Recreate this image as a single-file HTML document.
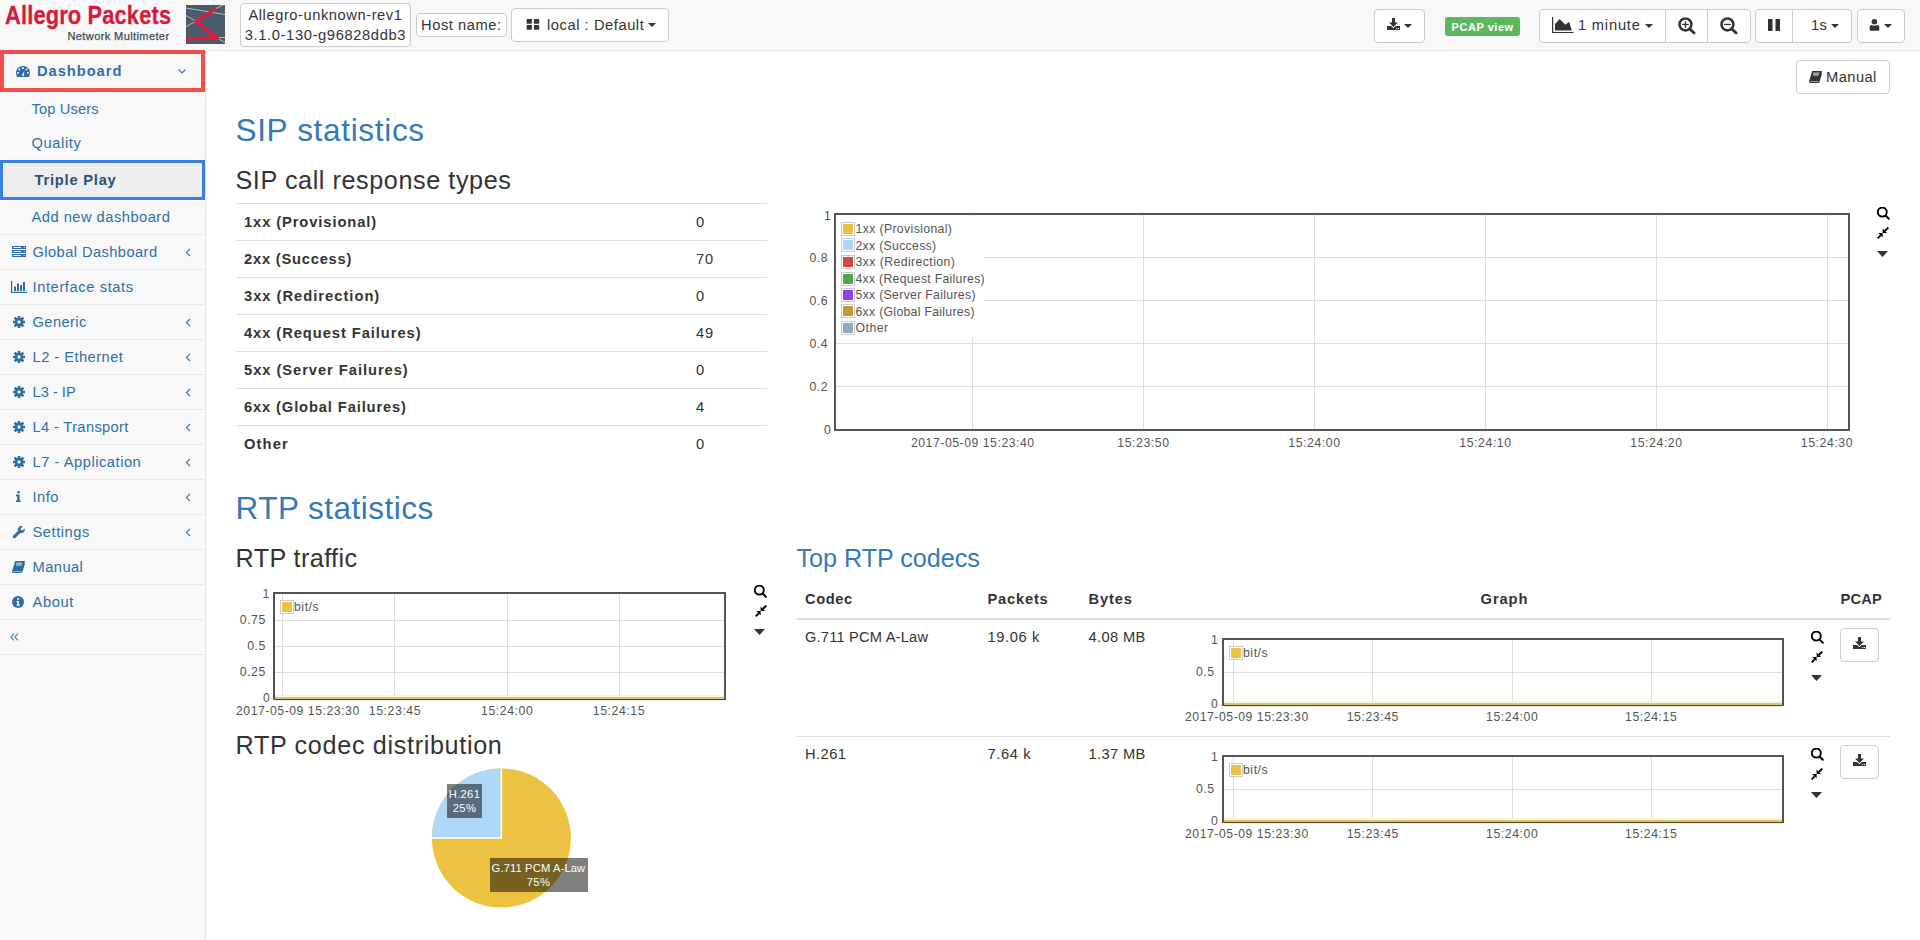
<!DOCTYPE html>
<html><head><meta charset="utf-8"><title>Allegro Packets - Triple Play</title>
<style>
html,body{margin:0;padding:0;width:1920px;height:940px;overflow:hidden;background:#fff;font-family:"Liberation Sans",sans-serif;}
.t{position:absolute;white-space:pre;}
.r{position:absolute;box-sizing:border-box;}
</style></head><body>
<div class="r" style="left:0px;top:0px;width:1920px;height:51px;background:#f8f8f8;border-bottom:1px solid #e7e7e7"></div>
<div class="t" style="left:4.5px;top:0px;font-size:25.3px;line-height:30px;font-weight:bold;color:#d81b3c;letter-spacing:0.2px;-webkit-text-stroke:0.3px #d81b3c;transform:scaleX(0.862);transform-origin:0 0">Allegro Packets</div>
<div class="t" style="left:67.5px;top:29.5px;font-size:11px;line-height:13px;color:#3e4a55;letter-spacing:0.4px;-webkit-text-stroke:0.25px #3e4a55">Network Multimeter</div>
<svg class="r" style="left:186px;top:5px;" width="39" height="39" viewBox="0 0 39 39"><rect width="39" height="39" fill="#4b5b6a"/><g stroke="#ccd6e0" stroke-width="0.8" fill="none"><path d="M0 3 L39 9.5"/><path d="M30 3.5 L39 -1"/><path d="M0 10.5 L10 16.3 L0 21.5"/><path d="M31 32.5 L39 32.5"/><path d="M31 33 L39 37.5"/></g><path d="M30 3.5 L10 16.3 L30.5 32.5 L0 33.8" stroke="#e8173e" stroke-width="3.2" fill="none" stroke-linejoin="miter"/></svg>
<div class="r" style="left:240px;top:3px;width:171px;height:44px;background:#fff;border:1px solid #ccc;border-radius:4px"></div>
<div class="t" style="left:248.45px;top:5.91px;font-size:14.70px;line-height:18px;letter-spacing:0.556px;color:#333;">Allegro-unknown-rev1</div>
<div class="t" style="left:244.78px;top:25.91px;font-size:14.70px;line-height:18px;letter-spacing:0.633px;color:#333;">3.1.0-130-g96828ddb3</div>
<div class="r" style="left:416px;top:13px;width:91px;height:24px;background:#fff;border:1px solid #ccc;border-radius:4px"></div>
<div class="t" style="left:421.00px;top:15.91px;font-size:14.70px;line-height:18px;letter-spacing:0.558px;color:#333;">Host name:</div>
<div class="r" style="left:511px;top:8px;width:158px;height:34px;background:#fff;border:1px solid #ccc;border-radius:4px"></div>
<svg class="r" style="left:526px;top:19px;" width="14" height="11" viewBox="0 0 14 11"><g fill="#333"><rect x="0.65" y="0" width="5.25" height="4.7" rx="0.7"/><rect x="7.9" y="0" width="5.3" height="4.7" rx="0.7"/><rect x="0.65" y="6.1" width="5.25" height="4.7" rx="0.7"/><rect x="7.9" y="6.1" width="5.3" height="4.7" rx="0.7"/></g></svg>
<div class="t" style="left:547.00px;top:15.91px;font-size:14.70px;line-height:18px;letter-spacing:0.555px;color:#333;">local : Default</div>
<svg class="r" style="left:648px;top:23px;" width="8" height="4" viewBox="0 0 8 4"><path d="M0 0 L8 0 L4 4 Z" fill="#333"/></svg>
<div class="r" style="left:1374px;top:9px;width:51px;height:34px;background:#fff;border:1px solid #ccc;border-radius:4px"></div>
<svg class="r" style="left:1387px;top:18px;" width="13" height="12" viewBox="0 0 13 12"><path d="M5 0 H8 V4.5 H11 L6.5 9 L2 4.5 H5 Z" fill="#333"/><path d="M0 8 H4.2 L6.5 10.2 L8.8 8 H13 V12 H0 Z" fill="#333"/><rect x="9.3" y="10" width="1.1" height="1.1" fill="#fff"/><rect x="11" y="10" width="1.1" height="1.1" fill="#fff"/></svg>
<svg class="r" style="left:1404.4px;top:24px;" width="8" height="4" viewBox="0 0 8 4"><path d="M0 0 L8 0 L4 4 Z" fill="#333"/></svg>
<div class="r" style="left:1445px;top:17px;width:75px;height:19px;background:#5cb85c;border-radius:3px"></div>
<div class="t" style="left:1451.50px;top:20.38px;font-size:11.03px;line-height:14px;letter-spacing:0.542px;color:#fff;font-weight:bold;">PCAP view</div>
<div class="r" style="left:1539px;top:9px;width:212px;height:34px;background:#fff;border:1px solid #ccc;border-radius:4px"></div>
<div class="r" style="left:1665px;top:9px;width:1px;height:34px;background:#ccc"></div>
<div class="r" style="left:1707px;top:9px;width:1px;height:34px;background:#ccc"></div>
<svg class="r" style="left:1552px;top:17px;" width="22" height="17" viewBox="0 0 22 17"><path d="M0 0 H1.2 V14.9 H21.5 V16 H0 Z" fill="#333"/><path d="M3 7.3 L7.5 1.9 L13.4 7.8 L17.2 4.7 L19.8 13.5 H3 Z" fill="#333"/></svg>
<div class="t" style="left:1578.00px;top:15.91px;font-size:14.70px;line-height:18px;letter-spacing:0.794px;color:#333;">1 minute</div>
<svg class="r" style="left:1645px;top:24px;" width="8" height="4" viewBox="0 0 8 4"><path d="M0 0 L8 0 L4 4 Z" fill="#333"/></svg>
<svg class="r" style="left:1678px;top:17px;" width="18" height="18" viewBox="0 0 18 18"><circle cx="7.45" cy="7.45" r="5.95" stroke="#333" stroke-width="2.5" fill="none"/><path d="M11.9 11.9 L16.1 16.1" stroke="#333" stroke-width="2.8" stroke-linecap="round"/><path d="M4.1 7.45 H10.8" stroke="#333" stroke-width="1.3"/><path d="M7.45 4.2 V10.8" stroke="#333" stroke-width="1.3"/></svg>
<svg class="r" style="left:1720px;top:17px;" width="18" height="18" viewBox="0 0 18 18"><circle cx="7.45" cy="7.45" r="5.95" stroke="#333" stroke-width="2.5" fill="none"/><path d="M11.9 11.9 L16.1 16.1" stroke="#333" stroke-width="2.8" stroke-linecap="round"/><path d="M4.1 7.45 H10.8" stroke="#333" stroke-width="1.3"/></svg>
<div class="r" style="left:1755px;top:9px;width:97px;height:34px;background:#fff;border:1px solid #ccc;border-radius:4px"></div>
<div class="r" style="left:1792px;top:9px;width:1px;height:34px;background:#ccc"></div>
<svg class="r" style="left:1768px;top:19px;" width="12" height="12" viewBox="0 0 12 12"><rect x="0" y="0" width="4.5" height="12" fill="#333"/><rect x="7.5" y="0" width="4.5" height="12" fill="#333"/></svg>
<div class="t" style="left:1811.00px;top:15.71px;font-size:14.70px;line-height:18px;letter-spacing:0.337px;color:#333;">1s</div>
<svg class="r" style="left:1831px;top:24px;" width="8" height="4" viewBox="0 0 8 4"><path d="M0 0 L8 0 L4 4 Z" fill="#333"/></svg>
<div class="r" style="left:1857px;top:9px;width:48px;height:34px;background:#fff;border:1px solid #ccc;border-radius:4px"></div>
<svg class="r" style="left:1869px;top:18px;" width="11" height="13" viewBox="0 0 11 13"><ellipse cx="5.4" cy="3.7" rx="2.8" ry="2.75" fill="#333"/><path d="M0.7 12.6 V9.2 C0.7 7.9 1.5 7.1 2.7 7.1 C3.5 7.5 4.4 7.7 5.4 7.7 C6.4 7.7 7.3 7.5 8.1 7.1 C9.4 7.1 10.2 7.9 10.3 9.2 V12.1 C10.3 12.5 10 12.7 9.6 12.7 H1.3 C0.9 12.7 0.7 12.5 0.7 12.1 Z" fill="#333"/></svg>
<svg class="r" style="left:1884px;top:24px;" width="8" height="4" viewBox="0 0 8 4"><path d="M0 0 L8 0 L4 4 Z" fill="#333"/></svg>
<div class="r" style="left:0px;top:51px;width:206px;height:889px;background:#f8f8f8;border-right:1px solid #e7e7e7"></div>
<div class="r" style="left:0px;top:50px;width:205px;height:42px;background:#f8f8f8;border:4px solid #f24c4c"></div>
<svg class="r" style="left:16px;top:66px;" width="14" height="11" viewBox="0 0 14 11"><path d="M7 0 C3.1 0 0 3.1 0 7 C0 8.4 0.4 9.8 1.1 11 H12.9 C13.6 9.8 14 8.4 14 7 C14 3.1 10.9 0 7 0 Z" fill="#2d6ca4"/><g fill="#f8f8f8"><rect x="1.1" y="6.1" width="1.7" height="1.7" rx="0.3"/><rect x="2.5" y="2.6" width="1.7" height="1.7" rx="0.3"/><rect x="6.1" y="1.2" width="1.7" height="1.7" rx="0.3"/><rect x="9.7" y="2.6" width="1.7" height="1.7" rx="0.3"/><rect x="11.1" y="6.1" width="1.7" height="1.7" rx="0.3"/><path d="M6.1 9.2 C6.1 8.4 6.6 7.9 7 7.6 L8.6 4.2 L7.9 8.1 C8.1 8.5 8.1 9.4 7.9 9.8 C7.5 10.4 6.3 10.2 6.1 9.2 Z"/></g></svg>
<div class="t" style="left:37.00px;top:61.91px;font-size:14.70px;line-height:18px;letter-spacing:0.956px;color:#2f70a9;font-weight:bold;">Dashboard</div>
<svg class="r" style="left:178px;top:69px;" width="8" height="5" viewBox="0 0 8 5"><path d="M0.6 0.6 L4 4 L7.4 0.6" stroke="#3a6d9a" stroke-width="1.2" fill="none"/></svg>
<div class="t" style="left:31.50px;top:100.21px;font-size:14.70px;line-height:18px;letter-spacing:0.123px;color:#2f70a9;">Top Users</div>
<div class="t" style="left:31.50px;top:134.41px;font-size:14.70px;line-height:18px;letter-spacing:0.611px;color:#2f70a9;">Quality</div>
<div class="r" style="left:0px;top:160px;width:205px;height:40px;background:#eeeeee;border:3px solid #3b7ddd"></div>
<div class="t" style="left:34.50px;top:170.91px;font-size:14.70px;line-height:18px;letter-spacing:0.779px;color:#23527c;font-weight:bold;">Triple Play</div>
<div class="t" style="left:31.50px;top:207.71px;font-size:14.70px;line-height:18px;letter-spacing:0.484px;color:#2f70a9;">Add new dashboard</div>
<div class="r" style="left:0px;top:234px;width:205px;height:1px;background:#e7e7e7"></div>
<div class="r" style="left:0px;top:269px;width:205px;height:1px;background:#e7e7e7"></div>
<div class="r" style="left:0px;top:304px;width:205px;height:1px;background:#e7e7e7"></div>
<div class="r" style="left:0px;top:339px;width:205px;height:1px;background:#e7e7e7"></div>
<div class="r" style="left:0px;top:374px;width:205px;height:1px;background:#e7e7e7"></div>
<div class="r" style="left:0px;top:409px;width:205px;height:1px;background:#e7e7e7"></div>
<div class="r" style="left:0px;top:444px;width:205px;height:1px;background:#e7e7e7"></div>
<div class="r" style="left:0px;top:479px;width:205px;height:1px;background:#e7e7e7"></div>
<div class="r" style="left:0px;top:514px;width:205px;height:1px;background:#e7e7e7"></div>
<div class="r" style="left:0px;top:549px;width:205px;height:1px;background:#e7e7e7"></div>
<div class="r" style="left:0px;top:584px;width:205px;height:1px;background:#e7e7e7"></div>
<div class="r" style="left:0px;top:619px;width:205px;height:1px;background:#e7e7e7"></div>
<div class="r" style="left:0px;top:654px;width:205px;height:1px;background:#e7e7e7"></div>
<div class="t" style="left:32.50px;top:242.61px;font-size:14.70px;line-height:18px;letter-spacing:0.411px;color:#2f70a9;">Global Dashboard</div>
<svg class="r" style="left:185px;top:248.2px;" width="6" height="9" viewBox="0 0 6 9"><path d="M5 1 L1.4 4.5 L5 8" stroke="#3f78ae" stroke-width="1.1" fill="none"/></svg>
<div class="t" style="left:32.50px;top:277.61px;font-size:14.70px;line-height:18px;letter-spacing:0.596px;color:#2f70a9;">Interface stats</div>
<div class="t" style="left:32.50px;top:312.61px;font-size:14.70px;line-height:18px;letter-spacing:0.403px;color:#2f70a9;">Generic</div>
<svg class="r" style="left:185px;top:318.2px;" width="6" height="9" viewBox="0 0 6 9"><path d="M5 1 L1.4 4.5 L5 8" stroke="#3f78ae" stroke-width="1.1" fill="none"/></svg>
<div class="t" style="left:32.50px;top:347.61px;font-size:14.70px;line-height:18px;letter-spacing:0.460px;color:#2f70a9;">L2 - Ethernet</div>
<svg class="r" style="left:185px;top:353.2px;" width="6" height="9" viewBox="0 0 6 9"><path d="M5 1 L1.4 4.5 L5 8" stroke="#3f78ae" stroke-width="1.1" fill="none"/></svg>
<div class="t" style="left:32.50px;top:382.61px;font-size:14.70px;line-height:18px;letter-spacing:-0.011px;color:#2f70a9;">L3 - IP</div>
<svg class="r" style="left:185px;top:388.2px;" width="6" height="9" viewBox="0 0 6 9"><path d="M5 1 L1.4 4.5 L5 8" stroke="#3f78ae" stroke-width="1.1" fill="none"/></svg>
<div class="t" style="left:32.50px;top:417.61px;font-size:14.70px;line-height:18px;letter-spacing:0.346px;color:#2f70a9;">L4 - Transport</div>
<svg class="r" style="left:185px;top:423.2px;" width="6" height="9" viewBox="0 0 6 9"><path d="M5 1 L1.4 4.5 L5 8" stroke="#3f78ae" stroke-width="1.1" fill="none"/></svg>
<div class="t" style="left:32.50px;top:452.61px;font-size:14.70px;line-height:18px;letter-spacing:0.523px;color:#2f70a9;">L7 - Application</div>
<svg class="r" style="left:185px;top:458.2px;" width="6" height="9" viewBox="0 0 6 9"><path d="M5 1 L1.4 4.5 L5 8" stroke="#3f78ae" stroke-width="1.1" fill="none"/></svg>
<div class="t" style="left:32.50px;top:487.61px;font-size:14.70px;line-height:18px;letter-spacing:0.494px;color:#2f70a9;">Info</div>
<svg class="r" style="left:185px;top:493.2px;" width="6" height="9" viewBox="0 0 6 9"><path d="M5 1 L1.4 4.5 L5 8" stroke="#3f78ae" stroke-width="1.1" fill="none"/></svg>
<div class="t" style="left:32.50px;top:522.61px;font-size:14.70px;line-height:18px;letter-spacing:0.538px;color:#2f70a9;">Settings</div>
<svg class="r" style="left:185px;top:528.2px;" width="6" height="9" viewBox="0 0 6 9"><path d="M5 1 L1.4 4.5 L5 8" stroke="#3f78ae" stroke-width="1.1" fill="none"/></svg>
<div class="t" style="left:32.50px;top:557.61px;font-size:14.70px;line-height:18px;letter-spacing:0.443px;color:#2f70a9;">Manual</div>
<div class="t" style="left:32.50px;top:592.61px;font-size:14.70px;line-height:18px;letter-spacing:0.595px;color:#2f70a9;">About</div>
<svg class="r" style="left:12px;top:246px;" width="14" height="11" viewBox="0 0 14 11"><g fill="#2f6ca6"><rect x="0" y="0" width="14" height="3"/><rect x="0" y="4" width="14" height="3"/><rect x="0" y="8" width="14" height="3"/></g><g fill="#f8f8f8"><rect x="1.2" y="1" width="8" height="1" rx="0.5"/><rect x="1.2" y="5" width="8" height="1" rx="0.5"/><rect x="1.2" y="9" width="8" height="1" rx="0.5"/><circle cx="12.2" cy="1.5" r="0.6"/><circle cx="12.2" cy="5.5" r="0.6"/><circle cx="12.2" cy="9.5" r="0.6"/></g></svg>
<svg class="r" style="left:11px;top:281px;" width="16" height="12" viewBox="0 0 16 12"><g fill="#2d6ca4"><rect x="0" y="0" width="1.2" height="12"/><rect x="0" y="10.8" width="16" height="1.2"/><rect x="3" y="5.5" width="2" height="4.5"/><rect x="6" y="2.5" width="2" height="7.5"/><rect x="9" y="4" width="2" height="6"/><rect x="12" y="1" width="2" height="9"/></g></svg>
<svg class="r" style="left:13px;top:316px;" width="12" height="12" viewBox="0 0 12 12"><g fill="#2d6ca4"><circle cx="6" cy="6" r="4.2"/><g id="tooth"><rect x="4.7" y="-0.2" width="2.6" height="3.2" rx="0.4" transform="rotate(0 6 6)"/><rect x="4.7" y="-0.2" width="2.6" height="3.2" rx="0.4" transform="rotate(45 6 6)"/><rect x="4.7" y="-0.2" width="2.6" height="3.2" rx="0.4" transform="rotate(90 6 6)"/><rect x="4.7" y="-0.2" width="2.6" height="3.2" rx="0.4" transform="rotate(135 6 6)"/><rect x="4.7" y="-0.2" width="2.6" height="3.2" rx="0.4" transform="rotate(180 6 6)"/><rect x="4.7" y="-0.2" width="2.6" height="3.2" rx="0.4" transform="rotate(225 6 6)"/><rect x="4.7" y="-0.2" width="2.6" height="3.2" rx="0.4" transform="rotate(270 6 6)"/><rect x="4.7" y="-0.2" width="2.6" height="3.2" rx="0.4" transform="rotate(315 6 6)"/></g></g><circle cx="6" cy="6" r="1.7" fill="#f8f8f8"/></svg>
<svg class="r" style="left:13px;top:351px;" width="12" height="12" viewBox="0 0 12 12"><g fill="#2d6ca4"><circle cx="6" cy="6" r="4.2"/><g id="tooth"><rect x="4.7" y="-0.2" width="2.6" height="3.2" rx="0.4" transform="rotate(0 6 6)"/><rect x="4.7" y="-0.2" width="2.6" height="3.2" rx="0.4" transform="rotate(45 6 6)"/><rect x="4.7" y="-0.2" width="2.6" height="3.2" rx="0.4" transform="rotate(90 6 6)"/><rect x="4.7" y="-0.2" width="2.6" height="3.2" rx="0.4" transform="rotate(135 6 6)"/><rect x="4.7" y="-0.2" width="2.6" height="3.2" rx="0.4" transform="rotate(180 6 6)"/><rect x="4.7" y="-0.2" width="2.6" height="3.2" rx="0.4" transform="rotate(225 6 6)"/><rect x="4.7" y="-0.2" width="2.6" height="3.2" rx="0.4" transform="rotate(270 6 6)"/><rect x="4.7" y="-0.2" width="2.6" height="3.2" rx="0.4" transform="rotate(315 6 6)"/></g></g><circle cx="6" cy="6" r="1.7" fill="#f8f8f8"/></svg>
<svg class="r" style="left:13px;top:386px;" width="12" height="12" viewBox="0 0 12 12"><g fill="#2d6ca4"><circle cx="6" cy="6" r="4.2"/><g id="tooth"><rect x="4.7" y="-0.2" width="2.6" height="3.2" rx="0.4" transform="rotate(0 6 6)"/><rect x="4.7" y="-0.2" width="2.6" height="3.2" rx="0.4" transform="rotate(45 6 6)"/><rect x="4.7" y="-0.2" width="2.6" height="3.2" rx="0.4" transform="rotate(90 6 6)"/><rect x="4.7" y="-0.2" width="2.6" height="3.2" rx="0.4" transform="rotate(135 6 6)"/><rect x="4.7" y="-0.2" width="2.6" height="3.2" rx="0.4" transform="rotate(180 6 6)"/><rect x="4.7" y="-0.2" width="2.6" height="3.2" rx="0.4" transform="rotate(225 6 6)"/><rect x="4.7" y="-0.2" width="2.6" height="3.2" rx="0.4" transform="rotate(270 6 6)"/><rect x="4.7" y="-0.2" width="2.6" height="3.2" rx="0.4" transform="rotate(315 6 6)"/></g></g><circle cx="6" cy="6" r="1.7" fill="#f8f8f8"/></svg>
<svg class="r" style="left:13px;top:421px;" width="12" height="12" viewBox="0 0 12 12"><g fill="#2d6ca4"><circle cx="6" cy="6" r="4.2"/><g id="tooth"><rect x="4.7" y="-0.2" width="2.6" height="3.2" rx="0.4" transform="rotate(0 6 6)"/><rect x="4.7" y="-0.2" width="2.6" height="3.2" rx="0.4" transform="rotate(45 6 6)"/><rect x="4.7" y="-0.2" width="2.6" height="3.2" rx="0.4" transform="rotate(90 6 6)"/><rect x="4.7" y="-0.2" width="2.6" height="3.2" rx="0.4" transform="rotate(135 6 6)"/><rect x="4.7" y="-0.2" width="2.6" height="3.2" rx="0.4" transform="rotate(180 6 6)"/><rect x="4.7" y="-0.2" width="2.6" height="3.2" rx="0.4" transform="rotate(225 6 6)"/><rect x="4.7" y="-0.2" width="2.6" height="3.2" rx="0.4" transform="rotate(270 6 6)"/><rect x="4.7" y="-0.2" width="2.6" height="3.2" rx="0.4" transform="rotate(315 6 6)"/></g></g><circle cx="6" cy="6" r="1.7" fill="#f8f8f8"/></svg>
<svg class="r" style="left:13px;top:456px;" width="12" height="12" viewBox="0 0 12 12"><g fill="#2d6ca4"><circle cx="6" cy="6" r="4.2"/><g id="tooth"><rect x="4.7" y="-0.2" width="2.6" height="3.2" rx="0.4" transform="rotate(0 6 6)"/><rect x="4.7" y="-0.2" width="2.6" height="3.2" rx="0.4" transform="rotate(45 6 6)"/><rect x="4.7" y="-0.2" width="2.6" height="3.2" rx="0.4" transform="rotate(90 6 6)"/><rect x="4.7" y="-0.2" width="2.6" height="3.2" rx="0.4" transform="rotate(135 6 6)"/><rect x="4.7" y="-0.2" width="2.6" height="3.2" rx="0.4" transform="rotate(180 6 6)"/><rect x="4.7" y="-0.2" width="2.6" height="3.2" rx="0.4" transform="rotate(225 6 6)"/><rect x="4.7" y="-0.2" width="2.6" height="3.2" rx="0.4" transform="rotate(270 6 6)"/><rect x="4.7" y="-0.2" width="2.6" height="3.2" rx="0.4" transform="rotate(315 6 6)"/></g></g><circle cx="6" cy="6" r="1.7" fill="#f8f8f8"/></svg>
<svg class="r" style="left:16px;top:491px;" width="5" height="11" viewBox="0 0 5 11"><g fill="#2d6ca4"><circle cx="2.6" cy="1.3" r="1.3"/><path d="M0 3.6 H3.6 V9.4 H4.8 V11 H0 V9.4 H1.2 V5.2 H0 Z"/></g></svg>
<svg class="r" style="left:12px;top:526px;" width="13" height="13" viewBox="0 0 13 13"><path d="M1.2 11.8 C0.4 11 0.6 10.2 1.4 9.5 L6.2 4.8 C5.6 3 6.1 1.3 7.6 0.5 C8.6 0 9.8 0 10.8 0.4 L8.6 2.6 L9 4.2 L10.6 4.5 L12.7 2.4 C13.1 3.6 12.9 5 12 6 C11 7 9.6 7.3 8.3 6.9 L3.5 11.7 C2.8 12.4 1.9 12.5 1.2 11.8 Z" fill="#2d6ca4"/></svg>
<svg class="r" style="left:12px;top:561px;" width="13" height="12" viewBox="0 0 13 12"><path d="M3.2 0 H13 L10.3 9.4 C10.1 10 9.6 10.3 9 10.3 H1.6 C1.1 10.3 1 10.6 1.3 10.8 H9.6 L12.3 2 L13 2.4 L10.3 11.4 C10.1 11.8 9.8 12 9.3 12 H1.6 C0.5 12 -0.2 11 0.2 9.8 Z" fill="#2d6ca4"/><path d="M4.4 2.2 H10.2 M3.9 4 H9.7" stroke="#f8f8f8" stroke-width="0.9"/></svg>
<svg class="r" style="left:12px;top:596px;" width="12" height="12" viewBox="0 0 12 12"><circle cx="6" cy="6" r="6" fill="#2d6ca4"/><circle cx="6.2" cy="3" r="1.1" fill="#f8f8f8"/><path d="M4.5 5 H7 V8.6 H7.8 V9.8 H4.5 V8.6 H5.3 V6.2 H4.5 Z" fill="#f8f8f8"/></svg>
<svg class="r" style="left:10px;top:633px;" width="9" height="8" viewBox="0 0 9 8"><path d="M4 0.6 L0.9 4 L4 7.4 M8 0.6 L4.9 4 L8 7.4" stroke="#3f78ae" stroke-width="1.1" fill="none"/></svg>
<div class="r" style="left:1796px;top:60px;width:94px;height:34px;background:#fff;border:1px solid #ccc;border-radius:4px"></div>
<svg class="r" style="left:1809px;top:71px;" width="13" height="12" viewBox="0 0 13 12"><path d="M3.2 0 H13 L10.3 9.4 C10.1 10 9.6 10.3 9 10.3 H1.6 C1.1 10.3 1 10.6 1.3 10.8 H9.6 L12.3 2 L13 2.4 L10.3 11.4 C10.1 11.8 9.8 12 9.3 12 H1.6 C0.5 12 -0.2 11 0.2 9.8 Z" fill="#333"/><path d="M4.4 2.2 H10.2 M3.9 4 H9.7" stroke="#fff" stroke-width="0.9"/></svg>
<div class="t" style="left:1826.00px;top:67.91px;font-size:14.70px;line-height:18px;letter-spacing:0.443px;color:#333;">Manual</div>
<div class="t" style="left:235.50px;top:111.19px;font-size:31.50px;line-height:39px;letter-spacing:0.680px;color:#337ab7;">SIP statistics</div>
<div class="t" style="left:235.50px;top:163.87px;font-size:25.20px;line-height:32px;letter-spacing:0.572px;color:#333;">SIP call response types</div>
<div class="r" style="left:236px;top:203px;width:531px;height:1px;background:#ddd"></div>
<div class="t" style="left:244.00px;top:212.81px;font-size:14.70px;line-height:18px;letter-spacing:0.912px;color:#333;font-weight:bold;">1xx (Provisional)</div>
<div class="t" style="left:696.00px;top:212.81px;font-size:14.70px;line-height:18px;letter-spacing:0.731px;color:#333;">0</div>
<div class="r" style="left:236px;top:240px;width:531px;height:1px;background:#ddd"></div>
<div class="t" style="left:244.00px;top:249.81px;font-size:14.70px;line-height:18px;letter-spacing:0.786px;color:#333;font-weight:bold;">2xx (Success)</div>
<div class="t" style="left:696.00px;top:249.81px;font-size:14.70px;line-height:18px;letter-spacing:0.731px;color:#333;">70</div>
<div class="r" style="left:236px;top:277px;width:531px;height:1px;background:#ddd"></div>
<div class="t" style="left:244.00px;top:286.81px;font-size:14.70px;line-height:18px;letter-spacing:1.005px;color:#333;font-weight:bold;">3xx (Redirection)</div>
<div class="t" style="left:696.00px;top:286.81px;font-size:14.70px;line-height:18px;letter-spacing:0.731px;color:#333;">0</div>
<div class="r" style="left:236px;top:314px;width:531px;height:1px;background:#ddd"></div>
<div class="t" style="left:244.00px;top:323.81px;font-size:14.70px;line-height:18px;letter-spacing:0.944px;color:#333;font-weight:bold;">4xx (Request Failures)</div>
<div class="t" style="left:696.00px;top:323.81px;font-size:14.70px;line-height:18px;letter-spacing:0.731px;color:#333;">49</div>
<div class="r" style="left:236px;top:351px;width:531px;height:1px;background:#ddd"></div>
<div class="t" style="left:244.00px;top:360.81px;font-size:14.70px;line-height:18px;letter-spacing:0.962px;color:#333;font-weight:bold;">5xx (Server Failures)</div>
<div class="t" style="left:696.00px;top:360.81px;font-size:14.70px;line-height:18px;letter-spacing:0.731px;color:#333;">0</div>
<div class="r" style="left:236px;top:388px;width:531px;height:1px;background:#ddd"></div>
<div class="t" style="left:244.00px;top:397.81px;font-size:14.70px;line-height:18px;letter-spacing:0.877px;color:#333;font-weight:bold;">6xx (Global Failures)</div>
<div class="t" style="left:696.00px;top:397.81px;font-size:14.70px;line-height:18px;letter-spacing:0.731px;color:#333;">4</div>
<div class="r" style="left:236px;top:425px;width:531px;height:1px;background:#ddd"></div>
<div class="t" style="left:244.00px;top:434.81px;font-size:14.70px;line-height:18px;letter-spacing:1.151px;color:#333;font-weight:bold;">Other</div>
<div class="t" style="left:696.00px;top:434.81px;font-size:14.70px;line-height:18px;letter-spacing:0.731px;color:#333;">0</div>
<div class="r" style="left:836px;top:257px;width:1012px;height:1px;background:#dcdcdc"></div>
<div class="r" style="left:836px;top:300px;width:1012px;height:1px;background:#dcdcdc"></div>
<div class="r" style="left:836px;top:343px;width:1012px;height:1px;background:#dcdcdc"></div>
<div class="r" style="left:836px;top:386px;width:1012px;height:1px;background:#dcdcdc"></div>
<div class="r" style="left:972px;top:215px;width:1px;height:214px;background:#dcdcdc"></div>
<div class="r" style="left:1143px;top:215px;width:1px;height:214px;background:#dcdcdc"></div>
<div class="r" style="left:1314px;top:215px;width:1px;height:214px;background:#dcdcdc"></div>
<div class="r" style="left:1485px;top:215px;width:1px;height:214px;background:#dcdcdc"></div>
<div class="r" style="left:1656px;top:215px;width:1px;height:214px;background:#dcdcdc"></div>
<div class="r" style="left:1827px;top:215px;width:1px;height:214px;background:#dcdcdc"></div>
<div class="r" style="left:837px;top:217px;width:147px;height:121px;background:#fff"></div>
<div class="r" style="left:834px;top:213px;width:1016px;height:218px;border:2px solid #545454"></div>
<div class="t" style="left:824.09px;top:209.25px;font-size:12.25px;line-height:15px;letter-spacing:0.599px;color:#545454;">1</div>
<div class="t" style="left:809.47px;top:251.35px;font-size:12.25px;line-height:15px;letter-spacing:0.499px;color:#545454;">0.8</div>
<div class="t" style="left:809.47px;top:294.25px;font-size:12.25px;line-height:15px;letter-spacing:0.499px;color:#545454;">0.6</div>
<div class="t" style="left:809.47px;top:337.25px;font-size:12.25px;line-height:15px;letter-spacing:0.499px;color:#545454;">0.4</div>
<div class="t" style="left:809.47px;top:379.95px;font-size:12.25px;line-height:15px;letter-spacing:0.499px;color:#545454;">0.2</div>
<div class="t" style="left:824.09px;top:423.15px;font-size:12.25px;line-height:15px;letter-spacing:0.599px;color:#545454;">0</div>
<div class="t" style="left:910.94px;top:436.45px;font-size:12.25px;line-height:15px;letter-spacing:0.525px;color:#545454;">2017-05-09 15:23:40</div>
<div class="t" style="left:1117.34px;top:436.45px;font-size:12.25px;line-height:15px;letter-spacing:0.580px;color:#545454;">15:23:50</div>
<div class="t" style="left:1288.34px;top:436.45px;font-size:12.25px;line-height:15px;letter-spacing:0.580px;color:#545454;">15:24:00</div>
<div class="t" style="left:1459.34px;top:436.45px;font-size:12.25px;line-height:15px;letter-spacing:0.580px;color:#545454;">15:24:10</div>
<div class="t" style="left:1630.34px;top:436.45px;font-size:12.25px;line-height:15px;letter-spacing:0.580px;color:#545454;">15:24:20</div>
<div class="t" style="left:1800.84px;top:436.45px;font-size:12.25px;line-height:15px;letter-spacing:0.580px;color:#545454;">15:24:30</div>
<div class="r" style="left:841px;top:222px;width:14px;height:14px;border:1px solid #ccc;background:#fff"></div>
<div class="r" style="left:843px;top:224px;width:10px;height:10px;background:#edc240"></div>
<div class="t" style="left:855.50px;top:222.25px;font-size:12.25px;line-height:15px;letter-spacing:0.368px;color:#545454;">1xx (Provisional)</div>
<div class="r" style="left:841px;top:238px;width:14px;height:14px;border:1px solid #ccc;background:#fff"></div>
<div class="r" style="left:843px;top:240px;width:10px;height:10px;background:#afd8f8"></div>
<div class="t" style="left:855.50px;top:238.75px;font-size:12.25px;line-height:15px;letter-spacing:0.305px;color:#545454;">2xx (Success)</div>
<div class="r" style="left:841px;top:255px;width:14px;height:14px;border:1px solid #ccc;background:#fff"></div>
<div class="r" style="left:843px;top:257px;width:10px;height:10px;background:#cb4b4b"></div>
<div class="t" style="left:855.50px;top:255.25px;font-size:12.25px;line-height:15px;letter-spacing:0.424px;color:#545454;">3xx (Redirection)</div>
<div class="r" style="left:841px;top:272px;width:14px;height:14px;border:1px solid #ccc;background:#fff"></div>
<div class="r" style="left:843px;top:274px;width:10px;height:10px;background:#4da74d"></div>
<div class="t" style="left:855.50px;top:271.75px;font-size:12.25px;line-height:15px;letter-spacing:0.282px;color:#545454;">4xx (Request Failures)</div>
<div class="r" style="left:841px;top:288px;width:14px;height:14px;border:1px solid #ccc;background:#fff"></div>
<div class="r" style="left:843px;top:290px;width:10px;height:10px;background:#9440ed"></div>
<div class="t" style="left:855.50px;top:288.25px;font-size:12.25px;line-height:15px;letter-spacing:0.315px;color:#545454;">5xx (Server Failures)</div>
<div class="r" style="left:841px;top:304px;width:14px;height:14px;border:1px solid #ccc;background:#fff"></div>
<div class="r" style="left:843px;top:306px;width:10px;height:10px;background:#bd9b33"></div>
<div class="t" style="left:855.50px;top:304.75px;font-size:12.25px;line-height:15px;letter-spacing:0.298px;color:#545454;">6xx (Global Failures)</div>
<div class="r" style="left:841px;top:321px;width:14px;height:14px;border:1px solid #ccc;background:#fff"></div>
<div class="r" style="left:843px;top:323px;width:10px;height:10px;background:#8cacc6"></div>
<div class="t" style="left:855.50px;top:321.25px;font-size:12.25px;line-height:15px;letter-spacing:0.488px;color:#545454;">Other</div>
<svg class="r" style="left:1877px;top:207px;" width="13" height="13" viewBox="0 0 13 13"><circle cx="5.3" cy="5.1" r="4.5" stroke="#000" stroke-width="1.9" fill="none"/><path d="M8.6 8.5 L11.8 11.7" stroke="#000" stroke-width="2" stroke-linecap="round"/></svg>
<svg class="r" style="left:1877px;top:227px;" width="12" height="12" viewBox="0 0 12 12"><g fill="#000"><path d="M1.2 5.9 H5.6 V10.3 Z"/><path d="M5.6 1.5 V5.9 H10 Z"/></g><g stroke="#000" stroke-width="1.9" stroke-linecap="butt"><path d="M0.7 11.3 L3.6 8.4"/><path d="M11.3 0.5 L7.8 4"/></g></svg>
<svg class="r" style="left:1877px;top:251px;" width="11" height="6" viewBox="0 0 11 6"><path d="M0 0 H11 L5.5 6 Z" fill="#333"/></svg>
<div class="t" style="left:235.50px;top:489.09px;font-size:31.50px;line-height:39px;letter-spacing:0.497px;color:#337ab7;">RTP statistics</div>
<div class="t" style="left:235.50px;top:542.17px;font-size:25.20px;line-height:32px;letter-spacing:0.403px;color:#333;">RTP traffic</div>
<div class="r" style="left:275px;top:620px;width:449px;height:1px;background:#dcdcdc"></div>
<div class="r" style="left:275px;top:646px;width:449px;height:1px;background:#dcdcdc"></div>
<div class="r" style="left:275px;top:672px;width:449px;height:1px;background:#dcdcdc"></div>
<div class="r" style="left:282px;top:594px;width:1px;height:104px;background:#dcdcdc"></div>
<div class="r" style="left:394px;top:594px;width:1px;height:104px;background:#dcdcdc"></div>
<div class="r" style="left:507px;top:594px;width:1px;height:104px;background:#dcdcdc"></div>
<div class="r" style="left:619px;top:594px;width:1px;height:104px;background:#dcdcdc"></div>
<div class="r" style="left:273px;top:592px;width:453px;height:108px;border:2px solid #545454"></div>
<div class="r" style="left:275px;top:695px;width:449px;height:2px;background:#fcf6cc"></div>
<div class="r" style="left:275px;top:697px;width:449px;height:2px;background:#d9c47c"></div>
<div class="r" style="left:275px;top:699px;width:449px;height:1px;background:#504418"></div>
<div class="r" style="left:275px;top:700px;width:449px;height:1px;background:#ededed"></div>
<div class="t" style="left:262.59px;top:587.25px;font-size:12.25px;line-height:15px;letter-spacing:0.599px;color:#545454;">1</div>
<div class="t" style="left:239.86px;top:613.25px;font-size:12.25px;line-height:15px;letter-spacing:0.524px;color:#545454;">0.75</div>
<div class="t" style="left:247.27px;top:638.95px;font-size:12.25px;line-height:15px;letter-spacing:0.499px;color:#545454;">0.5</div>
<div class="t" style="left:239.86px;top:664.55px;font-size:12.25px;line-height:15px;letter-spacing:0.524px;color:#545454;">0.25</div>
<div class="t" style="left:262.89px;top:691.25px;font-size:12.25px;line-height:15px;letter-spacing:0.599px;color:#545454;">0</div>
<div class="t" style="left:236.00px;top:704.15px;font-size:12.25px;line-height:15px;letter-spacing:0.525px;color:#545454;">2017-05-09 15:23:30</div>
<div class="t" style="left:368.84px;top:704.15px;font-size:12.25px;line-height:15px;letter-spacing:0.580px;color:#545454;">15:23:45</div>
<div class="t" style="left:481.04px;top:704.15px;font-size:12.25px;line-height:15px;letter-spacing:0.580px;color:#545454;">15:24:00</div>
<div class="t" style="left:592.84px;top:704.15px;font-size:12.25px;line-height:15px;letter-spacing:0.580px;color:#545454;">15:24:15</div>
<div class="r" style="left:280px;top:600px;width:14px;height:14px;border:1px solid #ccc;background:#fff"></div>
<div class="r" style="left:282px;top:602px;width:10px;height:10px;background:#edc240"></div>
<div class="t" style="left:294.00px;top:599.75px;font-size:12.25px;line-height:15px;letter-spacing:0.546px;color:#545454;">bit/s</div>
<svg class="r" style="left:754px;top:585px;" width="13" height="13" viewBox="0 0 13 13"><circle cx="5.3" cy="5.1" r="4.5" stroke="#000" stroke-width="1.9" fill="none"/><path d="M8.6 8.5 L11.8 11.7" stroke="#000" stroke-width="2" stroke-linecap="round"/></svg>
<svg class="r" style="left:754.5px;top:605px;" width="12" height="12" viewBox="0 0 12 12"><g fill="#000"><path d="M1.2 5.9 H5.6 V10.3 Z"/><path d="M5.6 1.5 V5.9 H10 Z"/></g><g stroke="#000" stroke-width="1.9" stroke-linecap="butt"><path d="M0.7 11.3 L3.6 8.4"/><path d="M11.3 0.5 L7.8 4"/></g></svg>
<svg class="r" style="left:754px;top:629px;" width="11" height="6" viewBox="0 0 11 6"><path d="M0 0 H11 L5.5 6 Z" fill="#333"/></svg>
<div class="t" style="left:235.50px;top:729.37px;font-size:25.20px;line-height:32px;letter-spacing:0.662px;color:#333;">RTP codec distribution</div>
<svg class="r" style="left:420px;top:756px;" width="164" height="164" viewBox="0 0 164 164"><circle cx="81.4" cy="82" r="69.5" fill="#edc240"/><path d="M81.4 82 L81.4 12.5 A69.5 69.5 0 0 0 11.9 82 Z" fill="#afd8f8"/><path d="M81.4 12.5 V82 H11.9" stroke="#fff" stroke-width="1.5" fill="none"/></svg>
<div class="r" style="left:447px;top:784px;width:35px;height:34px;background:rgba(0,0,0,0.5)"></div>
<div class="t" style="left:448.73px;top:786.52px;font-size:11.20px;line-height:14px;letter-spacing:0.329px;color:#fff;">H.261</div>
<div class="t" style="left:452.66px;top:800.92px;font-size:11.20px;line-height:14px;letter-spacing:0.418px;color:#fff;">25%</div>
<div class="r" style="left:490px;top:858px;width:98px;height:34px;background:rgba(0,0,0,0.5)"></div>
<div class="t" style="left:491.58px;top:860.52px;font-size:11.20px;line-height:14px;letter-spacing:0.128px;color:#fff;">G.711 PCM A-Law</div>
<div class="t" style="left:526.66px;top:875.02px;font-size:11.20px;line-height:14px;letter-spacing:0.418px;color:#fff;">75%</div>
<div class="t" style="left:796.50px;top:542.17px;font-size:25.20px;line-height:32px;letter-spacing:-0.041px;color:#337ab7;">Top RTP codecs</div>
<div class="t" style="left:805.00px;top:589.81px;font-size:14.70px;line-height:18px;letter-spacing:0.556px;color:#333;font-weight:bold;">Codec</div>
<div class="t" style="left:987.50px;top:589.81px;font-size:14.70px;line-height:18px;letter-spacing:0.787px;color:#333;font-weight:bold;">Packets</div>
<div class="t" style="left:1088.50px;top:589.81px;font-size:14.70px;line-height:18px;letter-spacing:0.856px;color:#333;font-weight:bold;">Bytes</div>
<div class="t" style="left:1840.50px;top:589.81px;font-size:14.70px;line-height:18px;letter-spacing:0.198px;color:#333;font-weight:bold;">PCAP</div>
<div class="t" style="left:1480.58px;top:589.81px;font-size:14.70px;line-height:18px;letter-spacing:0.909px;color:#333;font-weight:bold;">Graph</div>
<div class="r" style="left:797px;top:618px;width:1093px;height:2px;background:#ddd"></div>
<div class="r" style="left:797px;top:736px;width:1093px;height:1px;background:#ddd"></div>
<div class="t" style="left:805.00px;top:627.91px;font-size:14.70px;line-height:18px;letter-spacing:0.181px;color:#333;">G.711 PCM A-Law</div>
<div class="t" style="left:987.50px;top:627.91px;font-size:14.70px;line-height:18px;letter-spacing:0.631px;color:#333;">19.06 k</div>
<div class="t" style="left:1088.50px;top:627.91px;font-size:14.70px;line-height:18px;letter-spacing:0.366px;color:#333;">4.08 MB</div>
<div class="r" style="left:1224px;top:672px;width:558px;height:1px;background:#dcdcdc"></div>
<div class="r" style="left:1233px;top:640px;width:1px;height:64px;background:#dcdcdc"></div>
<div class="r" style="left:1372px;top:640px;width:1px;height:64px;background:#dcdcdc"></div>
<div class="r" style="left:1512px;top:640px;width:1px;height:64px;background:#dcdcdc"></div>
<div class="r" style="left:1651px;top:640px;width:1px;height:64px;background:#dcdcdc"></div>
<div class="r" style="left:1222px;top:638px;width:562px;height:68px;border:2px solid #545454"></div>
<div class="r" style="left:1224px;top:701px;width:558px;height:2px;background:#fcf6cc"></div>
<div class="r" style="left:1224px;top:703px;width:558px;height:2px;background:#d9c47c"></div>
<div class="r" style="left:1224px;top:705px;width:558px;height:1px;background:#504418"></div>
<div class="r" style="left:1224px;top:706px;width:558px;height:1px;background:#ededed"></div>
<div class="t" style="left:1211.09px;top:633.05px;font-size:12.25px;line-height:15px;letter-spacing:0.599px;color:#545454;">1</div>
<div class="t" style="left:1195.97px;top:664.95px;font-size:12.25px;line-height:15px;letter-spacing:0.499px;color:#545454;">0.5</div>
<div class="t" style="left:1211.09px;top:696.55px;font-size:12.25px;line-height:15px;letter-spacing:0.599px;color:#545454;">0</div>
<div class="t" style="left:1185.00px;top:709.95px;font-size:12.25px;line-height:15px;letter-spacing:0.525px;color:#545454;">2017-05-09 15:23:30</div>
<div class="t" style="left:1346.64px;top:709.95px;font-size:12.25px;line-height:15px;letter-spacing:0.580px;color:#545454;">15:23:45</div>
<div class="t" style="left:1486.04px;top:709.95px;font-size:12.25px;line-height:15px;letter-spacing:0.580px;color:#545454;">15:24:00</div>
<div class="t" style="left:1625.04px;top:709.95px;font-size:12.25px;line-height:15px;letter-spacing:0.580px;color:#545454;">15:24:15</div>
<div class="r" style="left:1229px;top:646px;width:14px;height:14px;border:1px solid #ccc;background:#fff"></div>
<div class="r" style="left:1231px;top:648px;width:10px;height:10px;background:#edc240"></div>
<div class="t" style="left:1243.00px;top:645.75px;font-size:12.25px;line-height:15px;letter-spacing:0.546px;color:#545454;">bit/s</div>
<svg class="r" style="left:1811px;top:631px;" width="13" height="13" viewBox="0 0 13 13"><circle cx="5.3" cy="5.1" r="4.5" stroke="#000" stroke-width="1.9" fill="none"/><path d="M8.6 8.5 L11.8 11.7" stroke="#000" stroke-width="2" stroke-linecap="round"/></svg>
<svg class="r" style="left:1811px;top:651px;" width="12" height="12" viewBox="0 0 12 12"><g fill="#000"><path d="M1.2 5.9 H5.6 V10.3 Z"/><path d="M5.6 1.5 V5.9 H10 Z"/></g><g stroke="#000" stroke-width="1.9" stroke-linecap="butt"><path d="M0.7 11.3 L3.6 8.4"/><path d="M11.3 0.5 L7.8 4"/></g></svg>
<svg class="r" style="left:1811px;top:675px;" width="11" height="6" viewBox="0 0 11 6"><path d="M0 0 H11 L5.5 6 Z" fill="#333"/></svg>
<div class="r" style="left:1840px;top:628px;width:39px;height:34px;background:#fff;border:1px solid #ccc;border-radius:4px"></div>
<svg class="r" style="left:1853px;top:637px;" width="13" height="12" viewBox="0 0 13 12"><path d="M5 0 H8 V4.5 H11 L6.5 9 L2 4.5 H5 Z" fill="#333"/><path d="M0 8 H4.2 L6.5 10.2 L8.8 8 H13 V12 H0 Z" fill="#333"/><rect x="9.3" y="10" width="1.1" height="1.1" fill="#fff"/><rect x="11" y="10" width="1.1" height="1.1" fill="#fff"/></svg>
<div class="t" style="left:805.00px;top:744.91px;font-size:14.70px;line-height:18px;letter-spacing:0.445px;color:#333;">H.261</div>
<div class="t" style="left:987.50px;top:744.91px;font-size:14.70px;line-height:18px;letter-spacing:0.614px;color:#333;">7.64 k</div>
<div class="t" style="left:1088.50px;top:744.91px;font-size:14.70px;line-height:18px;letter-spacing:0.366px;color:#333;">1.37 MB</div>
<div class="r" style="left:1224px;top:789px;width:558px;height:1px;background:#dcdcdc"></div>
<div class="r" style="left:1233px;top:757px;width:1px;height:64px;background:#dcdcdc"></div>
<div class="r" style="left:1372px;top:757px;width:1px;height:64px;background:#dcdcdc"></div>
<div class="r" style="left:1512px;top:757px;width:1px;height:64px;background:#dcdcdc"></div>
<div class="r" style="left:1651px;top:757px;width:1px;height:64px;background:#dcdcdc"></div>
<div class="r" style="left:1222px;top:755px;width:562px;height:68px;border:2px solid #545454"></div>
<div class="r" style="left:1224px;top:818px;width:558px;height:2px;background:#fcf6cc"></div>
<div class="r" style="left:1224px;top:820px;width:558px;height:2px;background:#d9c47c"></div>
<div class="r" style="left:1224px;top:822px;width:558px;height:1px;background:#504418"></div>
<div class="r" style="left:1224px;top:823px;width:558px;height:1px;background:#ededed"></div>
<div class="t" style="left:1211.09px;top:750.05px;font-size:12.25px;line-height:15px;letter-spacing:0.599px;color:#545454;">1</div>
<div class="t" style="left:1195.97px;top:781.95px;font-size:12.25px;line-height:15px;letter-spacing:0.499px;color:#545454;">0.5</div>
<div class="t" style="left:1211.09px;top:813.55px;font-size:12.25px;line-height:15px;letter-spacing:0.599px;color:#545454;">0</div>
<div class="t" style="left:1185.00px;top:826.95px;font-size:12.25px;line-height:15px;letter-spacing:0.525px;color:#545454;">2017-05-09 15:23:30</div>
<div class="t" style="left:1346.64px;top:826.95px;font-size:12.25px;line-height:15px;letter-spacing:0.580px;color:#545454;">15:23:45</div>
<div class="t" style="left:1486.04px;top:826.95px;font-size:12.25px;line-height:15px;letter-spacing:0.580px;color:#545454;">15:24:00</div>
<div class="t" style="left:1625.04px;top:826.95px;font-size:12.25px;line-height:15px;letter-spacing:0.580px;color:#545454;">15:24:15</div>
<div class="r" style="left:1229px;top:763px;width:14px;height:14px;border:1px solid #ccc;background:#fff"></div>
<div class="r" style="left:1231px;top:765px;width:10px;height:10px;background:#edc240"></div>
<div class="t" style="left:1243.00px;top:762.75px;font-size:12.25px;line-height:15px;letter-spacing:0.546px;color:#545454;">bit/s</div>
<svg class="r" style="left:1811px;top:748px;" width="13" height="13" viewBox="0 0 13 13"><circle cx="5.3" cy="5.1" r="4.5" stroke="#000" stroke-width="1.9" fill="none"/><path d="M8.6 8.5 L11.8 11.7" stroke="#000" stroke-width="2" stroke-linecap="round"/></svg>
<svg class="r" style="left:1811px;top:768px;" width="12" height="12" viewBox="0 0 12 12"><g fill="#000"><path d="M1.2 5.9 H5.6 V10.3 Z"/><path d="M5.6 1.5 V5.9 H10 Z"/></g><g stroke="#000" stroke-width="1.9" stroke-linecap="butt"><path d="M0.7 11.3 L3.6 8.4"/><path d="M11.3 0.5 L7.8 4"/></g></svg>
<svg class="r" style="left:1811px;top:792px;" width="11" height="6" viewBox="0 0 11 6"><path d="M0 0 H11 L5.5 6 Z" fill="#333"/></svg>
<div class="r" style="left:1840px;top:745px;width:39px;height:34px;background:#fff;border:1px solid #ccc;border-radius:4px"></div>
<svg class="r" style="left:1853px;top:754px;" width="13" height="12" viewBox="0 0 13 12"><path d="M5 0 H8 V4.5 H11 L6.5 9 L2 4.5 H5 Z" fill="#333"/><path d="M0 8 H4.2 L6.5 10.2 L8.8 8 H13 V12 H0 Z" fill="#333"/><rect x="9.3" y="10" width="1.1" height="1.1" fill="#fff"/><rect x="11" y="10" width="1.1" height="1.1" fill="#fff"/></svg>
</body></html>
